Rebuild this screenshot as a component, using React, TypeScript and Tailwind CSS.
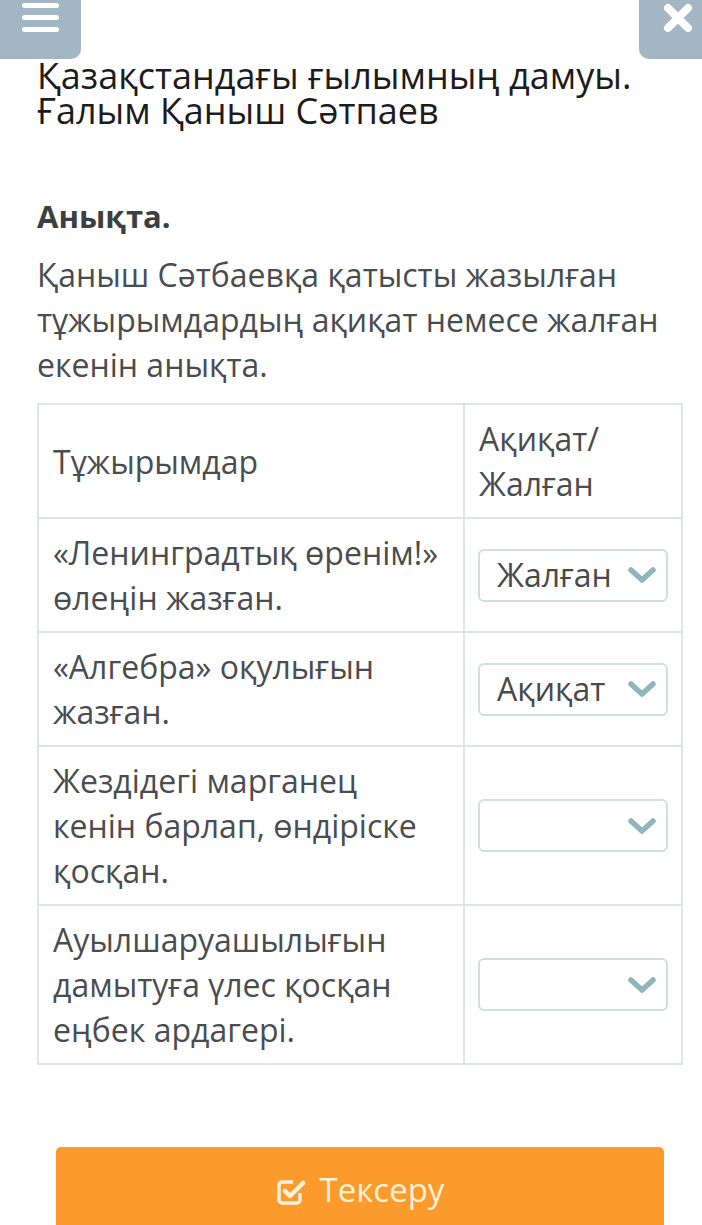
const rows: { text: string[]; value: string }[] = [
  { text: ['«Ленинградтық өренім!»', 'өлеңін жазған.'], value: 'Жалған' },
  { text: ['«Алгебра» оқулығын', 'жазған.'], value: 'Ақиқат' },
  { text: ['Жездідегі марганец', 'кенін барлап, өндіріске', 'қосқан.'], value: '' },
  { text: ['Ауылшаруашылығын', 'дамытуға үлес қосқан', 'еңбек ардагері.'], value: '' },
]

function Chevron() {
  return (
    <svg width="30" height="22" viewBox="0 0 30 22">
      <path d="M4 6 L15 16 L26 6" fill="none" stroke="#8fb6bd" strokeWidth="5.5" strokeLinecap="round" strokeLinejoin="round" />
    </svg>
  )
}

function Select({ value }: { value: string }) {
  return (
    <div className="flex h-[53px] w-[190px] items-center justify-between rounded-[6px] border-2 border-[#d5dede] bg-white pl-[17px] pr-[9px]">
      <span className="text-[32px] leading-none text-[#4a4a4a]">{value}</span>
      <Chevron />
    </div>
  )
}

export default function App() {
  return (
    <div className="relative min-h-[1225px] w-[702px] overflow-hidden bg-white font-['Open_Sans',sans-serif]">
      {/* top buttons */}
      <div className="flex items-start justify-between">
        <button className="flex h-[59px] w-[81px] flex-col items-center gap-[7px] rounded-br-[10px] bg-[#a3b6c4] pt-[3px]">
          <span className="h-[5px] w-[37px] rounded-full bg-white" />
          <span className="h-[5px] w-[37px] rounded-full bg-white" />
          <span className="h-[5px] w-[37px] rounded-full bg-white" />
        </button>
        <button className="flex h-[59px] w-[63px] justify-end rounded-bl-[10px] bg-[#a3b6c4] pr-[9px] pt-[3px]">
          <svg width="30" height="30" viewBox="0 0 30 30">
            <path d="M5 5 L25 25 M25 5 L5 25" stroke="white" strokeWidth="8" strokeLinecap="round" />
          </svg>
        </button>
      </div>

      <div className="ml-[37px] mr-[19px]">
        <h1 className="-mt-[1px] text-[36px] leading-[35px] text-[#1c1c1c]">
          Қазақстандағы ғылымның дамуы.
          <br />
          Ғалым Қаныш Сәтпаев
        </h1>

        <p className="mt-[70px] text-[31px] font-bold leading-[36px] text-[#3b3e42]">Анықта.</p>

        <p className="mt-[18px] text-[32px] leading-[45px] text-[#4a4d50]">
          Қаныш Сәтбаевқа қатысты жазылған тұжырымдардың ақиқат немесе жалған екенін анықта.
        </p>

        <table className="mt-[16px] w-full border-collapse border-2 border-[#dfe4e4] text-[32px] leading-[45px] text-[#4a4d50]">
          <tbody>
            <tr className="h-[114px]">
              <td className="w-[426px] border-2 border-[#dfe4e4] px-[14px] align-middle">Тұжырымдар</td>
              <td className="border-2 border-[#dfe4e4] px-[14px] align-middle">
                Ақиқат/
                <br />
                Жалған
              </td>
            </tr>
            {rows.map((r, i) => (
              <tr key={i}>
                <td className="border-2 border-[#dfe4e4] px-[14px] py-[11px] align-middle">
                  {r.text.map((l, j) => (
                    <div key={j}>{l}</div>
                  ))}
                </td>
                <td className="border-2 border-[#dfe4e4] px-[13px] align-middle">
                  <Select value={r.value} />
                </td>
              </tr>
            ))}
          </tbody>
        </table>

        <div className="mt-[82px] px-[19px]">
          <button className="flex h-[90px] w-full items-start justify-center gap-[14px] rounded-t-[5px] bg-[#fb9b2b] pt-[21px] text-[33px] leading-[44px] text-[#fdf1dc]">
            <svg width="30" height="30" viewBox="0 0 30 30" className="mt-[8px]">
              <path d="M24 17 V24 a3 3 0 0 1 -3 3 H6 a3 3 0 0 1 -3 -3 V9 a3 3 0 0 1 3 -3 H17" fill="none" stroke="currentColor" strokeWidth="3.5" />
              <path d="M9 15 L14 20 L27 7" fill="none" stroke="currentColor" strokeWidth="4.5" strokeLinecap="round" strokeLinejoin="round" />
            </svg>
            Тексеру
          </button>
        </div>
      </div>
    </div>
  )
}
